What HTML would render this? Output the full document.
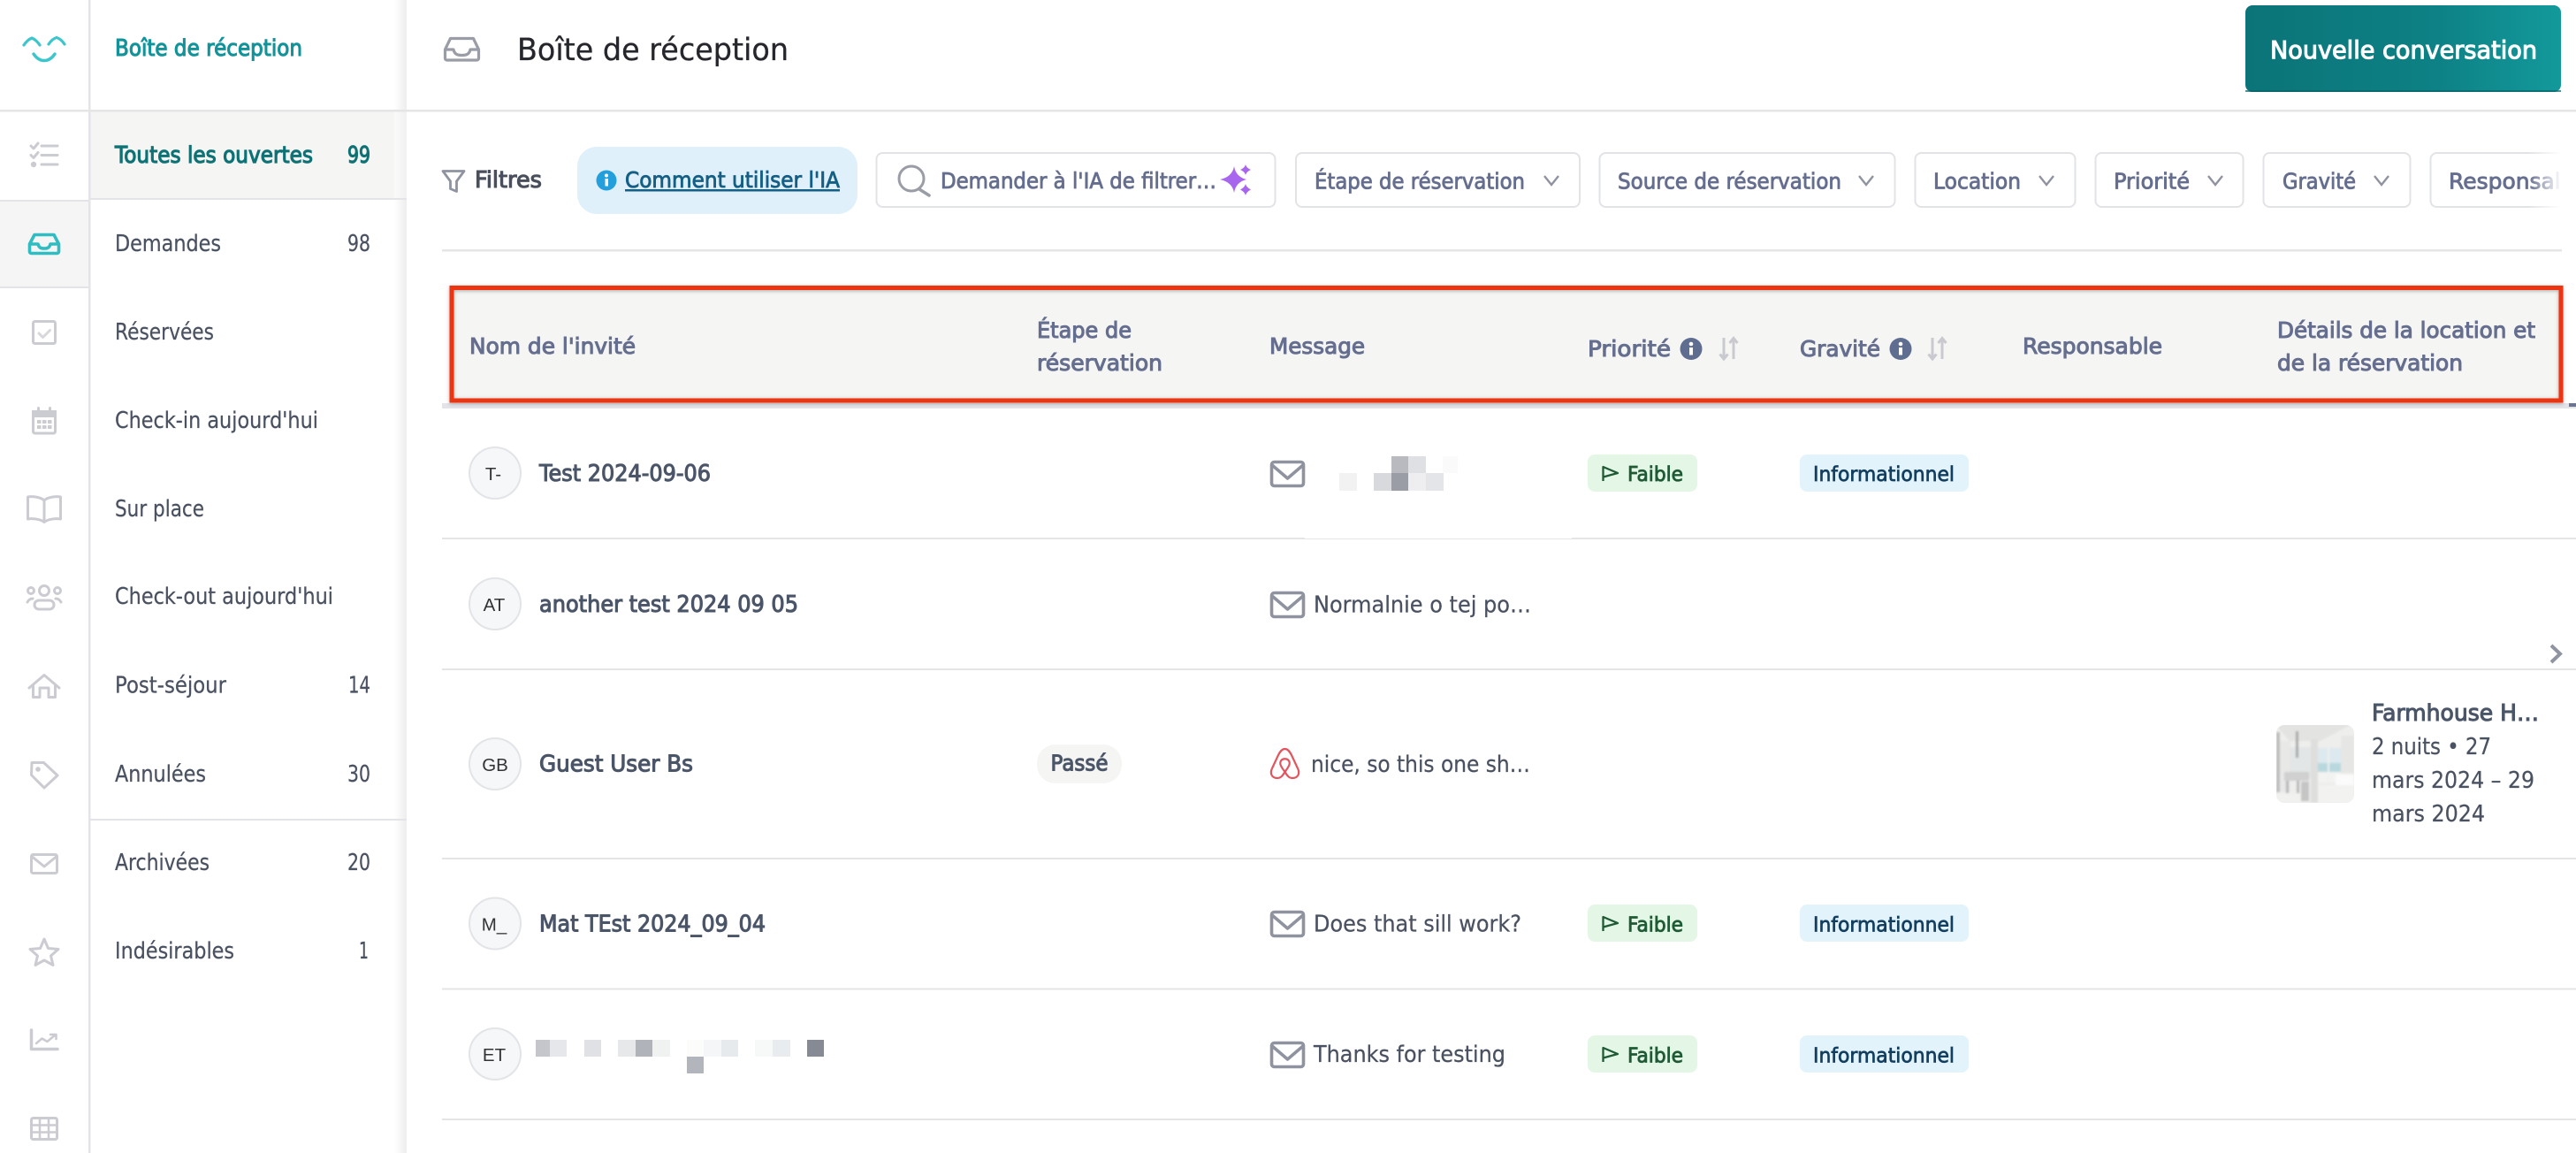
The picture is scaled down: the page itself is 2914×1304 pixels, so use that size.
<!DOCTYPE html>
<html lang="fr"><head><meta charset="utf-8"><title>Boîte de réception</title>
<style>
html,body{margin:0;padding:0;background:#fff;width:2914px;height:1304px;overflow:hidden}
svg{display:block;font-family:"DejaVu Sans","Liberation Sans",sans-serif;font-size:25.5px}
text{white-space:pre}
.n{fill:#4a5262;stroke:#4a5262;stroke-width:.25}
.s{fill:#4a5568;stroke:#4a5568;stroke-width:1.05}
.h{fill:#656e8e;stroke:#656e8e;stroke-width:1.05;font-size:25px}
.c{fill:#656e8e;stroke:#656e8e;stroke-width:.85;font-size:24.5px}
.g{fill:#1f5a35;stroke:#1f5a35;stroke-width:.85;font-size:23px}
.b{fill:#123f5f;stroke:#123f5f;stroke-width:.75;font-size:23px}
.a{fill:#333;font-family:"Liberation Sans",sans-serif;font-size:20.5px;text-anchor:middle}
.ic{fill:none;stroke:#cbccd2;stroke-width:3;stroke-linecap:round;stroke-linejoin:round}
.m{fill:none;stroke:#8f93a0;stroke-width:3.6;stroke-linejoin:round}
.ch{fill:none;stroke:#8f93a0;stroke-width:2.4}
.so{fill:none;stroke:#c9cad0;stroke-width:3}
</style></head><body>
<svg width="2914" height="1304" viewBox="0 0 2914 1304" xmlns="http://www.w3.org/2000/svg">
<defs>
<linearGradient id="sh" x1="0" x2="1" y1="0" y2="0"><stop offset="0" stop-color="#fff"/><stop offset="1" stop-color="#ededee"/></linearGradient>
<linearGradient id="btn" x1="0" x2="1" y1="0" y2="0"><stop offset="0" stop-color="#0b7478"/><stop offset=".6" stop-color="#0d8185"/><stop offset="1" stop-color="#13999b"/></linearGradient>
<linearGradient id="fade" x1="0" x2="1" y1="0" y2="0"><stop offset="0" stop-color="#fff" stop-opacity="0"/><stop offset="1" stop-color="#fff"/></linearGradient>
<clipPath id="thumb"><rect x="2575" y="820" width="88" height="88" rx="9"/></clipPath>
<filter id="bl" x="-5%" y="-5%" width="110%" height="110%"><feGaussianBlur stdDeviation="1.1"/></filter>
</defs>

<!-- Sidebar structure -->
<rect x="446" y="0" width="14" height="1304" fill="url(#sh)"/>
<rect x="102" y="125" width="358" height="100" fill="#f5f5f4"/>
<rect x="446" y="125" width="14" height="100" fill="url(#sh)" opacity=".5"/>
<rect x="0" y="226" width="100" height="100" fill="#f5f5f5"/>
<rect x="100" y="0" width="2.5" height="1304" fill="#e3e4e7"/>
<rect x="0" y="124" width="2914" height="2.5" fill="#e5e5e6"/>
<rect x="102" y="224" width="358" height="2" fill="#e3e4e7"/>
<rect x="0" y="226" width="100" height="2" fill="#e3e4e7"/>
<rect x="0" y="324" width="100" height="2" fill="#e3e4e7"/>
<rect x="102" y="926" width="358" height="2" fill="#e3e4e7"/>

<!-- Logo -->
<g fill="none" stroke="#3cc6cc" stroke-linecap="round" stroke-linejoin="round">
<path d="M27 51Q31 45 36 43Q41 45 45 51" stroke-width="3.200"/>
<path d="M55 50Q59 44 64 42.500Q69 44 73 50" stroke-width="3.200"/>
<path d="M38 61Q43 68.500 50 68.500Q57 68.500 62 61" stroke-width="3.400"/>
</g>
<!-- Rail icons -->
<g class="ic">
<path d="M47 165H65M47 175.500H65M47 186H65"/>
<path d="M35 165l3 3 5-6M35 175.500l3 3 5-6"/>
<rect x="37.500" y="363.500" width="25" height="25" rx="2"/>
<path d="M44 377l4.500 4.500 8-8" stroke="#d7d8dc"/>
<rect x="37.500" y="466" width="25" height="24" rx="2"/>
<path d="M43.500 461.500v5M56.500 461.500v5"/>
<path d="M50 566C46 562 36 561 31.500 562V587C36 586 46 587 50 590.500C54 587 64 586 68.500 587V562C64 561 54 562 50 566ZM50 566V590.500"/>
<circle cx="50" cy="668" r="5.500"/><circle cx="35" cy="668" r="3.500"/><circle cx="65" cy="668" r="3.500"/>
<rect x="39" y="679" width="22" height="10" rx="5"/>
<path d="M31 681q2-4 6-4M69 681q-2-4-6-4"/>
<path d="M33 778L50 763.500L67 778M37.500 775V788.500H45V778H55V788.500H62.500V775"/>
<path d="M36 862.500H49.500L65 877L50 891L35.500 876.500Z"/>
<rect x="35.500" y="966.500" width="29" height="21" rx="2"/>
<path d="M36.500 969L50 980L63.500 969"/>
<path d="M50 1062L54.500 1072.500L66 1073.500L57.500 1081L60 1091.500L50 1086L40 1091.500L42.500 1081L34 1073.500L45.500 1072.500Z"/>
<path d="M35.500 1165V1186.500H65" stroke-width="3.500"/>
<path d="M41 1180L47.500 1174.500L53.500 1178L63 1170M57 1170H63.500V1175" stroke-width="2.500"/>
<rect x="35.500" y="1264.500" width="29" height="24" rx="2"/>
<path d="M36 1272.500H64M36 1280.500H64M45 1265V1288M55 1265V1288" stroke-width="2.500"/>
</g>
<circle cx="38" cy="186" r="3.200" fill="#cbccd2"/>
<rect x="36" y="464" width="28" height="8" fill="#cbccd2"/>
<g fill="#cbccd2"><rect x="42" y="475" width="4.500" height="4"/><rect x="48" y="475" width="4.500" height="4"/><rect x="54" y="475" width="4.500" height="4"/><rect x="42" y="481" width="4.500" height="4"/><rect x="48" y="481" width="4.500" height="4"/><rect x="54" y="481" width="4.500" height="4"/>
<circle cx="43" cy="870" r="2.800"/></g>
<path d="M33.500 276L39 265.500H61L66.500 276V284.500a2 2 0 0 1-2 2H35.500a2 2 0 0 1-2-2ZM34 276H43C44 280 46 281 50 281C54 281 56 280 57 276H66" fill="none" stroke="#2fbdc2" stroke-width="3.600" stroke-linejoin="round"/>

<!-- Sidebar text -->
<text x="130" y="63" textLength="212" lengthAdjust="spacingAndGlyphs" style="fill:#12939a;stroke:#12939a;stroke-width:1.05">Boîte de réception</text>
<text x="130" y="184" textLength="224" lengthAdjust="spacingAndGlyphs" style="fill:#0f7275;stroke:#0f7275;stroke-width:1.15">Toutes les ouvertes</text>
<text x="393" y="184" textLength="26" lengthAdjust="spacingAndGlyphs" style="fill:#0f7275;stroke:#0f7275;stroke-width:1.15">99</text>
<g class="n">
<text x="130" y="284" textLength="120" lengthAdjust="spacingAndGlyphs">Demandes</text>
<text x="393" y="284" textLength="26" lengthAdjust="spacingAndGlyphs">98</text>
<text x="130" y="384" textLength="112" lengthAdjust="spacingAndGlyphs">Réservées</text>
<text x="130" y="484" textLength="230" lengthAdjust="spacingAndGlyphs">Check-in aujourd'hui</text>
<text x="130" y="584" textLength="101" lengthAdjust="spacingAndGlyphs">Sur place</text>
<text x="130" y="683" textLength="247" lengthAdjust="spacingAndGlyphs">Check-out aujourd'hui</text>
<text x="130" y="783.500" textLength="126" lengthAdjust="spacingAndGlyphs">Post-séjour</text>
<text x="394" y="783.500" textLength="25" lengthAdjust="spacingAndGlyphs">14</text>
<text x="130" y="884" textLength="103" lengthAdjust="spacingAndGlyphs">Annulées</text>
<text x="393" y="884" textLength="26" lengthAdjust="spacingAndGlyphs">30</text>
<text x="130" y="984" textLength="107" lengthAdjust="spacingAndGlyphs">Archivées</text>
<text x="393" y="984" textLength="26" lengthAdjust="spacingAndGlyphs">20</text>
<text x="130" y="1084" textLength="135" lengthAdjust="spacingAndGlyphs">Indésirables</text>
<text x="406" y="1084" textLength="11" lengthAdjust="spacingAndGlyphs">1</text>
</g>

<!-- Page header -->
<path d="M503.500 56L509.500 43.500H535.500L541.500 56V66a2 2 0 0 1-2 2H505.500a2 2 0 0 1-2-2ZM504 56H513C514 61 517 62.500 522.500 62.500C528 62.500 531 61 532 56H541" fill="none" stroke="#9a9ca6" stroke-width="3.200" stroke-linejoin="round"/>
<text x="585" y="68" textLength="307" lengthAdjust="spacingAndGlyphs" style="font-size:35px;fill:#25272c;stroke:#25272c;stroke-width:.3">Boîte de réception</text>
<rect x="2540" y="6" width="357" height="98" rx="8" fill="url(#btn)"/>
<rect x="2540" y="102" width="357" height="2" fill="#0a6266" opacity=".7"/>
<text x="2568" y="66" textLength="302" lengthAdjust="spacingAndGlyphs" style="font-size:28px;fill:#fff;stroke:#fff;stroke-width:1.1">Nouvelle conversation</text>

<!-- Filters -->
<path d="M501 193.500H525L516.500 205V216.500L509.500 213.500V205Z" fill="none" stroke="#8f93a0" stroke-width="2.800" stroke-linejoin="round"/>
<text x="537" y="212" textLength="76" lengthAdjust="spacingAndGlyphs" style="font-size:25.5px;fill:#4a4f5c;stroke:#4a4f5c;stroke-width:1.1">Filtres</text>
<rect x="653" y="166" width="317" height="76" rx="22" fill="#e0f0fa"/>
<circle cx="686" cy="204" r="11.500" fill="#23a0dc"/>
<rect x="684.500" y="202" width="3.500" height="8.500" fill="#fff"/><circle cx="686" cy="198.500" r="2" fill="#fff"/>
<text x="707" y="212" textLength="243" lengthAdjust="spacingAndGlyphs" style="font-size:25px;fill:#155f85;stroke:#155f85;stroke-width:.85">Comment utiliser l'IA</text>
<rect x="707" y="214" width="243" height="2.500" fill="#155f85"/>

<rect x="991.500" y="173" width="451" height="61" rx="7" fill="#fff" stroke="#e2e3e6" stroke-width="2"/>
<circle cx="1031" cy="202" r="14" fill="none" stroke="#9a9ca6" stroke-width="3"/>
<path d="M1040 214L1051 221" stroke="#9a9ca6" stroke-width="3.500" stroke-linecap="round"/>
<text class="c" x="1064" y="213" textLength="312" lengthAdjust="spacingAndGlyphs">Demander à l'IA de filtrer…</text>
<g fill="#a866ee">
<path d="M1396 188Q1398 200 1410 203Q1398 206 1396 218Q1394 206 1380 203Q1394 200 1396 188Z"/>
<path d="M1409 186Q1410 190 1415 192Q1410 194 1409 198Q1408 194 1403 192Q1408 190 1409 186Z"/>
<path d="M1409 208Q1410 212 1415 214.500Q1410 217 1409 221Q1408 217 1403 214.500Q1408 212 1409 208Z"/>
</g>

<g fill="#fff" stroke="#e2e3e6" stroke-width="2">
<rect x="1466" y="173" width="321" height="61" rx="7"/>
<rect x="1809.500" y="173" width="334" height="61" rx="7"/>
<rect x="2166.500" y="173" width="181" height="61" rx="7"/>
<rect x="2370.500" y="173" width="167" height="61" rx="7"/>
<rect x="2560.500" y="173" width="166" height="61" rx="7"/>
<rect x="2749.500" y="173" width="200" height="61" rx="7"/>
</g>
<g class="c">
<text x="1487" y="213.500" textLength="238" lengthAdjust="spacingAndGlyphs">Étape de réservation</text>
<text x="1830" y="213.500" textLength="253" lengthAdjust="spacingAndGlyphs">Source de réservation</text>
<text x="2187" y="213.500" textLength="99" lengthAdjust="spacingAndGlyphs">Location</text>
<text x="2391" y="213.500" textLength="86" lengthAdjust="spacingAndGlyphs">Priorité</text>
<text x="2582" y="213.500" textLength="83" lengthAdjust="spacingAndGlyphs">Gravité</text>
<text x="2770" y="213.500" textLength="158" lengthAdjust="spacingAndGlyphs">Responsable</text>
</g>
<g class="ch">
<path d="M1747 199L1755 209L1763 199"/>
<path d="M2103 199L2111 209L2119 199"/>
<path d="M2307 199L2315 209L2323 199"/>
<path d="M2498 199L2506 209L2514 199"/>
<path d="M2686 199L2694 209L2702 199"/>
</g>
<rect x="2860" y="165" width="37" height="75" fill="url(#fade)"/>
<rect x="2895" y="165" width="19" height="80" fill="#fff"/>
<rect x="500" y="282" width="2398" height="2.500" fill="#e5e5e6"/>

<!-- Table header -->
<rect x="500" y="456" width="2414" height="6" fill="#e3e3e8"/>
<rect x="2906" y="456" width="8" height="4" fill="#6b7590"/>
<rect x="511" y="325" width="2386" height="128" fill="#f5f5f3"/>
<rect x="511" y="325.500" width="2386" height="127.500" fill="none" stroke="#ee3311" stroke-width="5" style="filter:drop-shadow(0 1px 2px rgba(0,0,0,.3))"/>
<g class="h">
<text x="531" y="400" textLength="188" lengthAdjust="spacingAndGlyphs">Nom de l'invité</text>
<text x="1173" y="382" textLength="107" lengthAdjust="spacingAndGlyphs">Étape de</text>
<text x="1173" y="419" textLength="142" lengthAdjust="spacingAndGlyphs">réservation</text>
<text x="1436" y="400" textLength="108" lengthAdjust="spacingAndGlyphs">Message</text>
<text x="1796" y="403" textLength="94" lengthAdjust="spacingAndGlyphs">Priorité</text>
<text x="2036" y="403" textLength="91" lengthAdjust="spacingAndGlyphs">Gravité</text>
<text x="2288" y="400" textLength="158" lengthAdjust="spacingAndGlyphs">Responsable</text>
<text x="2576" y="382" textLength="292" lengthAdjust="spacingAndGlyphs">Détails de la location et</text>
<text x="2576" y="419" textLength="210" lengthAdjust="spacingAndGlyphs">de la réservation</text>
</g>
<g fill="#5f6d90"><circle cx="1913" cy="394.500" r="12.500"/><circle cx="2150" cy="394.500" r="12.500"/></g>
<g fill="#fff"><circle cx="1913" cy="389" r="2.300"/><rect x="1911" y="393" width="4" height="8.500"/><circle cx="2150" cy="389" r="2.300"/><rect x="2148" y="393" width="4" height="8.500"/></g>
<g class="so">
<path d="M1950 382V405M1945.500 400.500L1950 406L1954.500 400.500"/>
<path d="M1961 406V383M1956.500 388L1961 382.500L1965.500 388"/>
<path d="M2186 382V405M2181.500 400.500L2186 406L2190.500 400.500"/>
<path d="M2197 406V383M2192.500 388L2197 382.500L2201.500 388"/>
</g>

<!-- Row dividers -->
<g fill="#e5e5e6">
<rect x="500" y="608" width="2414" height="2"/>
<rect x="500" y="756" width="2414" height="2"/>
<rect x="500" y="970" width="2414" height="2"/>
<rect x="500" y="1117.500" width="2414" height="2"/>
<rect x="500" y="1265" width="2414" height="2"/>
</g>
<rect x="1476" y="608" width="302" height="1" fill="#fff"/>

<!-- Avatars -->
<g fill="#f5f7f8" stroke="#e2e4e8" stroke-width="2">
<circle cx="560" cy="535" r="29"/><circle cx="560" cy="683" r="29"/><circle cx="560" cy="864" r="29"/><circle cx="560" cy="1044.500" r="29"/><circle cx="560" cy="1192" r="29"/>
</g>
<g class="a">
<text x="558" y="543">T-</text><text x="559" y="691">AT</text><text x="560" y="872">GB</text><text x="559" y="1052.500">M_</text><text x="559" y="1200">ET</text>
</g>

<!-- Names -->
<g class="s">
<text x="610" y="544" textLength="194" lengthAdjust="spacingAndGlyphs">Test 2024-09-06</text>
<text x="610" y="692" textLength="293" lengthAdjust="spacingAndGlyphs">another test 2024 09 05</text>
<text x="610" y="872.500" textLength="174" lengthAdjust="spacingAndGlyphs">Guest User Bs</text>
<text x="610" y="1053.500" textLength="256" lengthAdjust="spacingAndGlyphs">Mat TEst 2024_09_04</text>
</g>

<!-- Row 5 pixelated name -->
<g>
<rect x="606" y="1176" width="16" height="19" fill="#c4c6cc"/><rect x="622" y="1176" width="19" height="19" fill="#e6e7ea"/>
<rect x="661" y="1176" width="19" height="19" fill="#dfe1e4"/><rect x="699" y="1176" width="20" height="19" fill="#e6e8ea"/>
<rect x="719" y="1176" width="19" height="19" fill="#b0b3b9"/><rect x="738" y="1176" width="20" height="19" fill="#f0f2f2"/>
<rect x="777" y="1176" width="19" height="19" fill="#fcfdfb"/><rect x="796" y="1176" width="20" height="19" fill="#f4f6f7"/>
<rect x="816" y="1176" width="19" height="19" fill="#e6eaec"/><rect x="854" y="1176" width="20" height="19" fill="#f7f9f9"/>
<rect x="874" y="1176" width="20" height="19" fill="#e9ecee"/><rect x="913" y="1176" width="19" height="19" fill="#868a95"/>
<rect x="777" y="1195" width="19" height="19" fill="#b2b5bb"/>
</g>

<!-- Row 1 pixelated message -->
<g>
<rect x="1574" y="516" width="19" height="19" fill="#b8bac0"/><rect x="1593" y="516" width="20" height="19" fill="#dfe0e3"/><rect x="1632" y="516" width="17" height="19" fill="#fafafa"/>
<rect x="1515" y="535" width="20" height="20" fill="#f2f2f2"/><rect x="1554" y="535" width="20" height="20" fill="#d8d9dc"/><rect x="1574" y="535" width="19" height="20" fill="#9a9ca6"/><rect x="1593" y="535" width="20" height="20" fill="#eeeef0"/><rect x="1613" y="535" width="20" height="20" fill="#e4e5e8"/>
</g>

<!-- Pass pill -->
<rect x="1173" y="842" width="96" height="44" rx="21" fill="#f5f5f4"/>
<text class="s" x="1188.500" y="871.500" textLength="65" lengthAdjust="spacingAndGlyphs" style="font-size:24.5px">Passé</text>

<!-- Message icons -->
<g class="m">
<rect x="1438.500" y="522.500" width="36" height="27" rx="3"/><path d="M1439 526L1456.500 541L1474 526"/>
<rect x="1438.500" y="670.500" width="36" height="27" rx="3"/><path d="M1439 674L1456.500 689L1474 674"/>
<rect x="1438.500" y="1031.500" width="36" height="27" rx="3"/><path d="M1439 1035L1456.500 1050L1474 1035"/>
<rect x="1438.500" y="1179.500" width="36" height="27" rx="3"/><path d="M1439 1183L1456.500 1198L1474 1183"/>
</g>
<path d="M1453.500 847C1450 847 1448 850 1446 854L1439 869C1436 875 1439 880 1445 880C1449 880 1451 877 1453.500 873C1456 877 1458 880 1462 880C1468 880 1471 875 1468 869L1461 854C1459 850 1457 847 1453.500 847ZM1453.500 873C1449 867 1447 863.500 1449 860.500C1451 857.500 1456 857.500 1458 860.500C1460 863.500 1458 867 1453.500 873Z" fill="none" stroke="#e2555f" stroke-width="2.200" stroke-linejoin="round"/>

<g class="n">
<text x="1486" y="692.500" textLength="246" lengthAdjust="spacingAndGlyphs">Normalnie o tej po…</text>
<text x="1483" y="873" textLength="248" lengthAdjust="spacingAndGlyphs">nice, so this one sh…</text>
<text x="1486" y="1053.500" textLength="235" lengthAdjust="spacingAndGlyphs">Does that sill work?</text>
<text x="1486" y="1201" textLength="217" lengthAdjust="spacingAndGlyphs">Thanks for testing</text>
</g>

<!-- Badges -->
<g fill="#e4f6e5">
<rect x="1796" y="514" width="124" height="42" rx="8"/><rect x="1796" y="1023" width="124" height="42" rx="8"/><rect x="1796" y="1171" width="124" height="42" rx="8"/>
</g>
<g fill="#e3f3fc">
<rect x="2036" y="514" width="191" height="42" rx="8"/><rect x="2036" y="1023" width="191" height="42" rx="8"/><rect x="2036" y="1171" width="191" height="42" rx="8"/>
</g>
<g fill="none" stroke="#1f5a35" stroke-width="2.300" stroke-linejoin="round">
<path d="M1813.500 544V528L1830 535L1813.500 539.500"/>
<path d="M1813.500 1053V1037L1830 1044L1813.500 1048.500"/>
<path d="M1813.500 1201V1185L1830 1192L1813.500 1196.500"/>
</g>
<g class="g">
<text x="1841" y="544" textLength="63" lengthAdjust="spacingAndGlyphs">Faible</text>
<text x="1841" y="1053.500" textLength="63" lengthAdjust="spacingAndGlyphs">Faible</text>
<text x="1841" y="1201.500" textLength="63" lengthAdjust="spacingAndGlyphs">Faible</text>
</g>
<g class="b">
<text x="2051" y="544" textLength="160" lengthAdjust="spacingAndGlyphs">Informationnel</text>
<text x="2051" y="1053.500" textLength="160" lengthAdjust="spacingAndGlyphs">Informationnel</text>
<text x="2051" y="1201.500" textLength="160" lengthAdjust="spacingAndGlyphs">Informationnel</text>
</g>

<!-- Scroll chevron -->
<path d="M2886 730L2896 739.500L2886 749" fill="none" stroke="#8f94a0" stroke-width="4"/>

<!-- Thumbnail -->
<g clip-path="url(#thumb)"><g filter="url(#bl)">
<rect x="2570" y="815" width="98" height="98" fill="#eeeeed"/>
<path d="M2570 815H2668L2625 838H2590Z" fill="#e3e3e1"/>
<rect x="2575" y="828" width="4" height="68" fill="#bdbebd"/>
<rect x="2579" y="838" width="12" height="58" fill="#e8e8e7"/>
<rect x="2590" y="845" width="24" height="35" fill="#e2e6e6"/>
<rect x="2597" y="827" width="3" height="30" fill="#a8a9a9"/>
<rect x="2614" y="836" width="8" height="72" fill="#dededc"/>
<rect x="2622" y="846" width="26" height="17" fill="#dce9ee"/>
<rect x="2622" y="863" width="26" height="10" fill="#b7d8de"/>
<rect x="2622" y="873" width="26" height="12" fill="#f3f3f1"/>
<rect x="2633" y="846" width="2" height="39" fill="#f0f0ef"/>
<rect x="2648" y="832" width="15" height="42" fill="#e6e6e5"/>
<rect x="2584" y="873" width="28" height="10" fill="#cfd0cf"/>
<rect x="2586" y="883" width="3" height="14" fill="#b5b6b5"/><rect x="2598" y="883" width="3" height="14" fill="#b5b6b5"/>
<rect x="2603" y="884" width="9" height="22" fill="#c4c5c4"/>
<rect x="2642" y="876" width="21" height="18" fill="#fbfbfb"/>
<rect x="2575" y="897" width="28" height="11" fill="#f1f1f0"/>
<rect x="2622" y="888" width="41" height="20" fill="#f2f2f1"/>
</g></g>
<text class="s" x="2683" y="815" textLength="189" lengthAdjust="spacingAndGlyphs">Farmhouse H…</text>
<g class="n">
<text x="2683" y="853" textLength="135" lengthAdjust="spacingAndGlyphs">2 nuits • 27</text>
<text x="2683" y="891" textLength="184" lengthAdjust="spacingAndGlyphs">mars 2024 – 29</text>
<text x="2683" y="929" textLength="128" lengthAdjust="spacingAndGlyphs">mars 2024</text>
</g>
</svg>
</body></html>
